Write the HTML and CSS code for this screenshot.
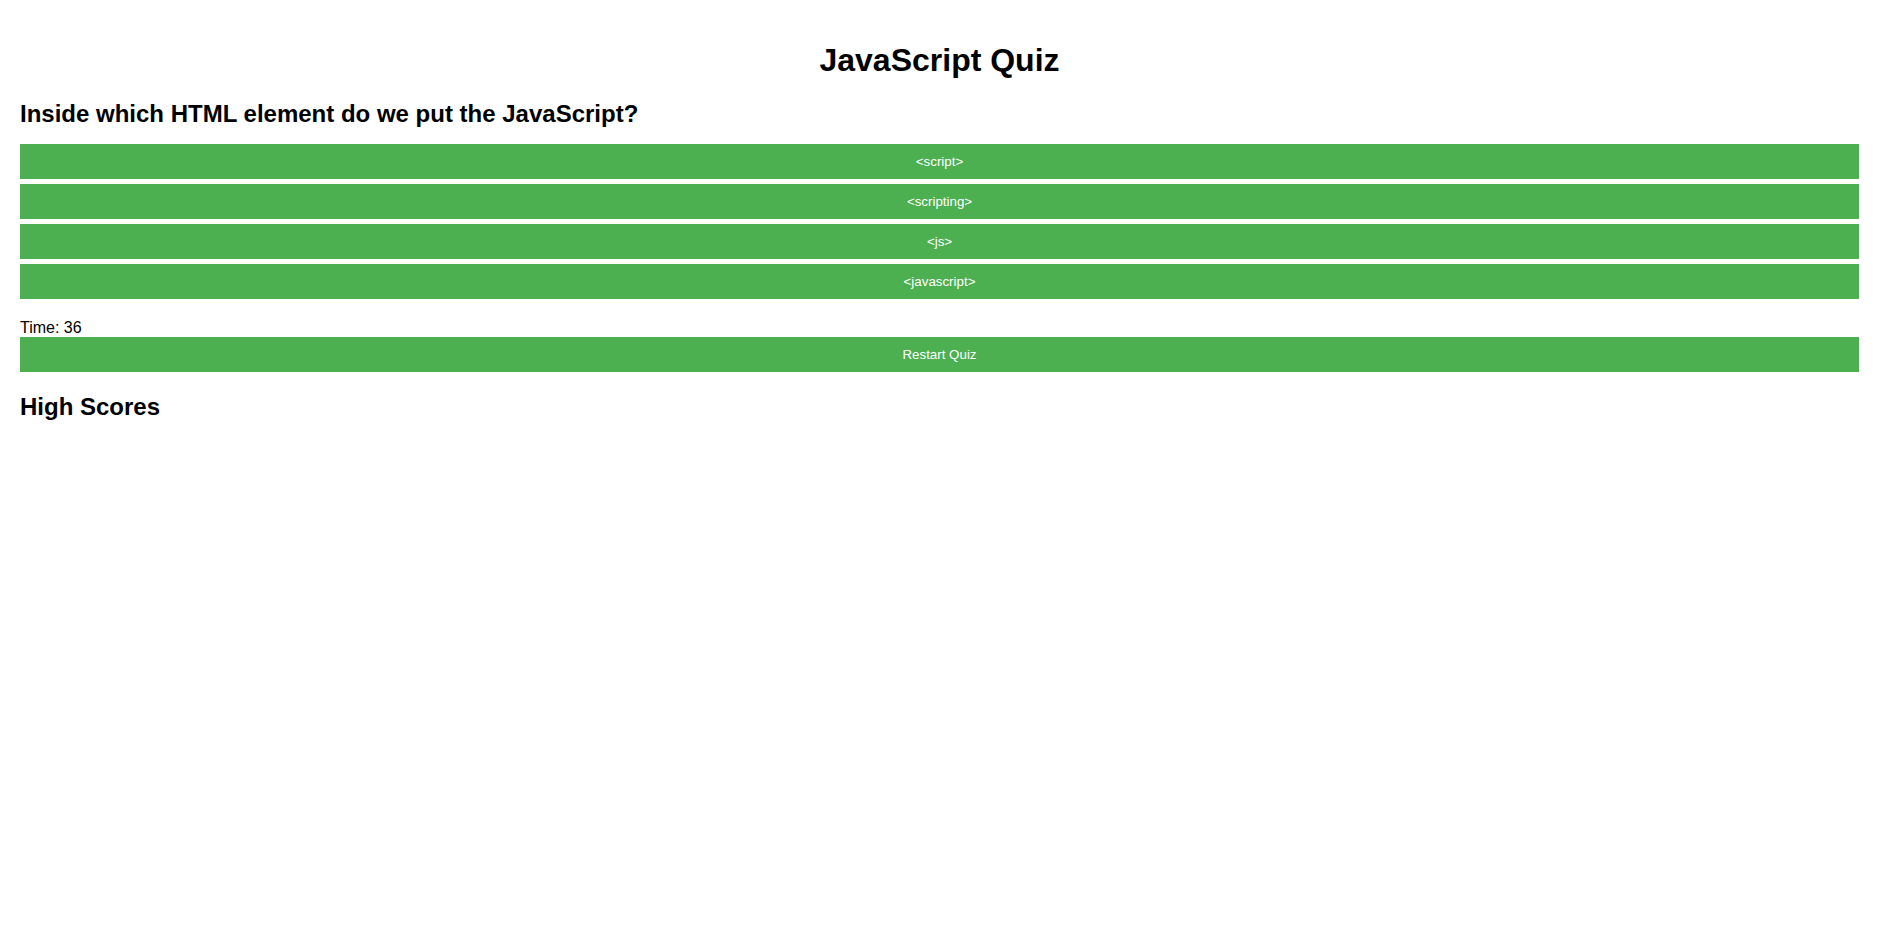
FILE: index.html
```html
<!DOCTYPE html>
<html lang="en">
<head>
<meta charset="utf-8">
<title>JavaScript Quiz</title>
<link rel="stylesheet" href="styles.css">
</head>
<body>
<div class="container">
  <h1 class="title">JavaScript Quiz</h1>
  <div class="quiz">
    <h2 class="question">Inside which HTML element do we put the JavaScript?</h2>
    <div class="choices">
      <button class="btn">&lt;script&gt;</button>
      <button class="btn">&lt;scripting&gt;</button>
      <button class="btn">&lt;js&gt;</button>
      <button class="btn">&lt;javascript&gt;</button>
    </div>
  </div>
  <div class="timer">Time: 36</div>
  <button class="btn restart">Restart Quiz</button>
  <h2 class="scores-title">High Scores</h2>
  <ul class="scores"></ul>
</div>
</body>
</html>
```
FILE: styles.css
```css
html, body {
  margin: 0;
  padding: 0;
  background: #fff;
}
body {
  font-family: "Liberation Sans", Arial, sans-serif;
  color: #000;
}
.container {
  padding: 21px 20px 20px;
}
.title {
  font-size: 32px;
  font-weight: bold;
  text-align: center;
  margin: 21px 0;
}
.question {
  font-size: 24px;
  font-weight: bold;
  margin: 20px 0 16px;
}
.choices {
  display: flex;
  flex-direction: column;
  gap: 5px;
  margin-bottom: 20px;
}
.btn {
  display: block;
  width: 100%;
  height: 35px;
  padding: 0;
  border: none;
  background: #4CAF50;
  color: #fff;
  font-family: "Liberation Sans", Arial, sans-serif;
  font-size: 13.333px;
  cursor: pointer;
}
.timer {
  font-size: 16px;
  line-height: 18px;
}
.scores-title {
  font-size: 24px;
  font-weight: bold;
  margin: 21px 0 20px;
}
.scores {
  margin: 0;
  padding: 0;
}
```
